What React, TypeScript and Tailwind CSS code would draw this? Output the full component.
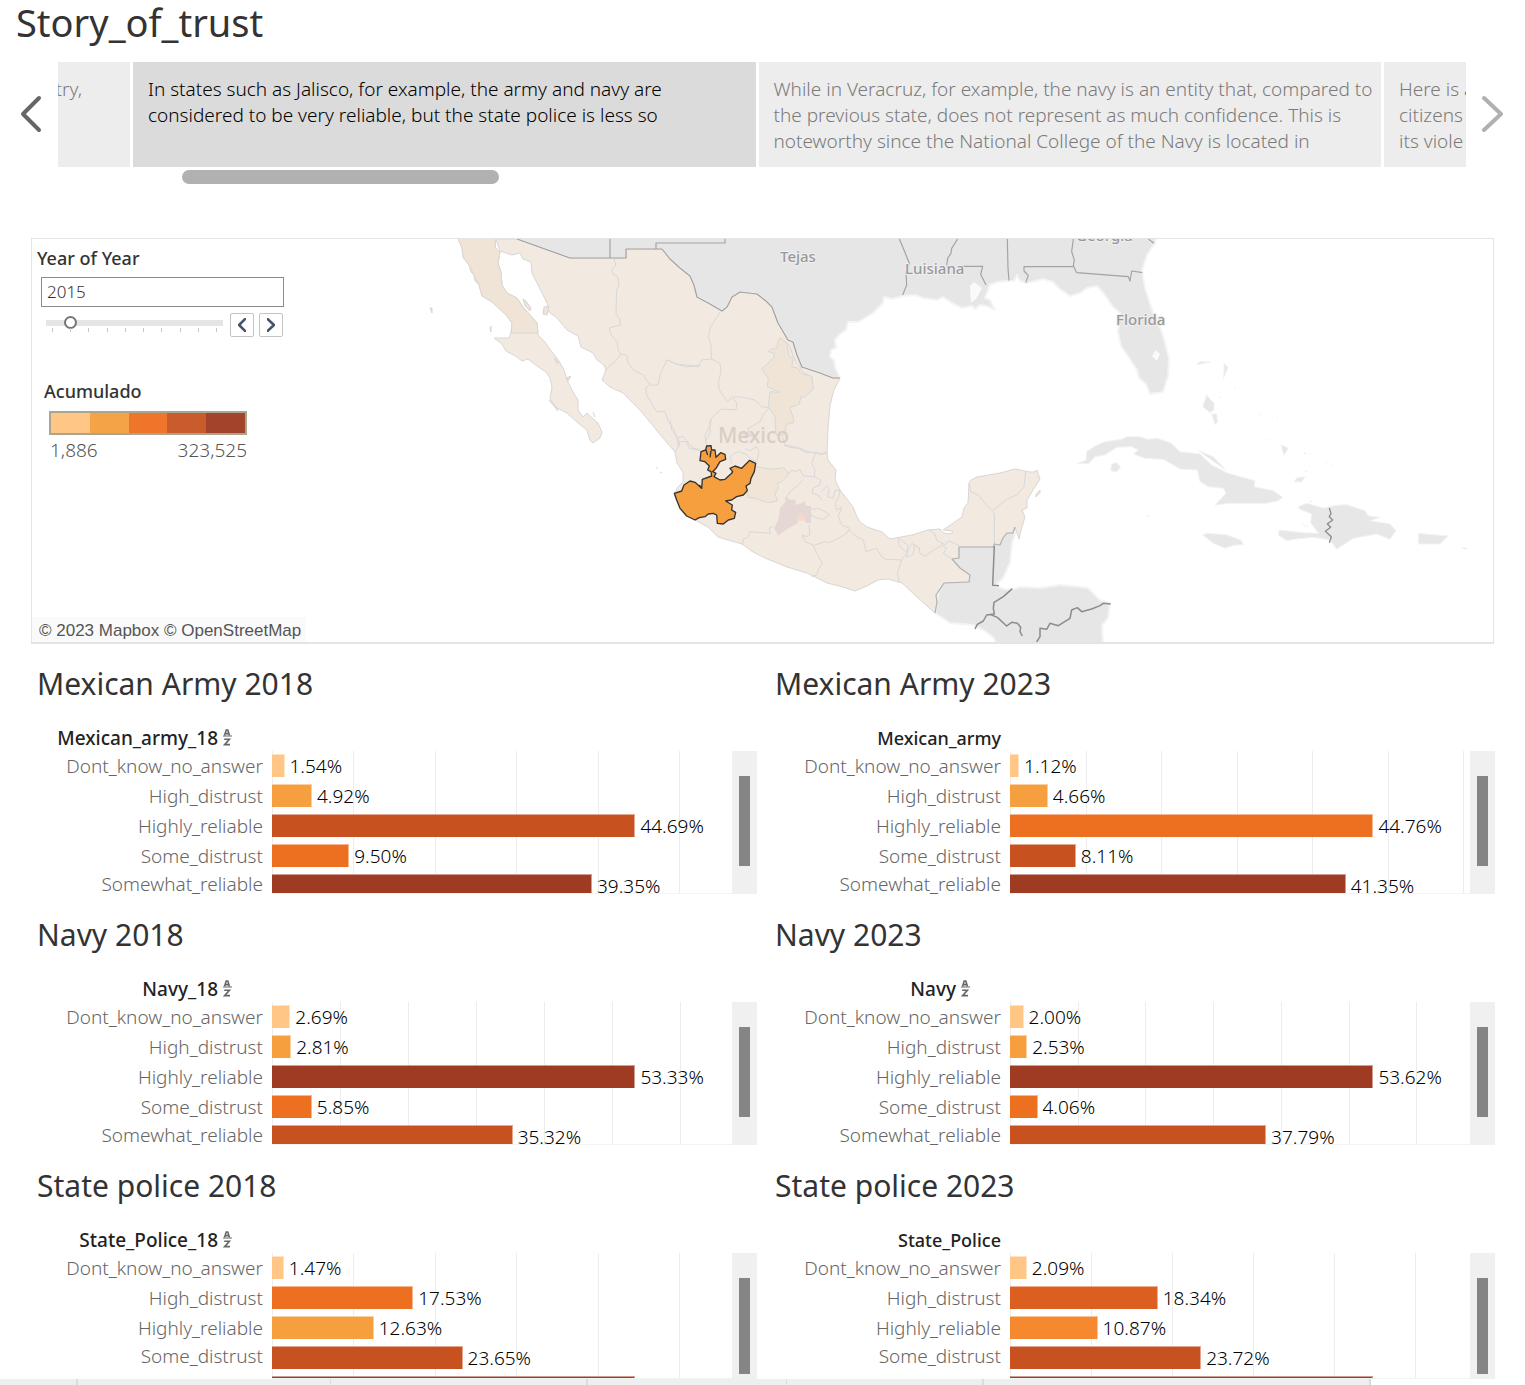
import React from "react";

type Row = { label: string; value: number; color: string };
type Chart = {
  title: string;
  field: string;
  sorted: boolean;
  max: number;
  tick: number;
  rows: Row[];
};

const LABELS = [
  "Dont_know_no_answer",
  "High_distrust",
  "Highly_reliable",
  "Some_distrust",
  "Somewhat_reliable",
];

const PEACH = "#ffc685";
const AMBER = "#f69f3e";
const ORANGE = "#ed6f20";
const RUST = "#c75220";
const BRICK = "#9e3b22";

/* Share of the plot's width that the longest bar takes. */
const FULL_BAR = 79;

function makeRows(values: number[], colors: string[]): Row[] {
  return values.map((value, i) => ({ label: LABELS[i], value, color: colors[i] }));
}

const CHARTS: Chart[] = [
  {
    title: "Mexican Army 2018",
    field: "Mexican_army_18",
    sorted: true,
    max: 44.69,
    tick: 17.7,
    rows: makeRows([1.54, 4.92, 44.69, 9.5, 39.35], [PEACH, AMBER, RUST, ORANGE, BRICK]),
  },
  {
    title: "Mexican Army 2023",
    field: "Mexican_army",
    sorted: false,
    max: 44.76,
    tick: 16.43,
    rows: makeRows([1.12, 4.66, 44.76, 8.11, 41.35], [PEACH, AMBER, ORANGE, RUST, BRICK]),
  },
  {
    title: "Navy 2018",
    field: "Navy_18",
    sorted: true,
    max: 53.33,
    tick: 14.8,
    rows: makeRows([2.69, 2.81, 53.33, 5.85, 35.32], [PEACH, AMBER, BRICK, ORANGE, RUST]),
  },
  {
    title: "Navy 2023",
    field: "Navy",
    sorted: true,
    max: 53.62,
    tick: 14.72,
    rows: makeRows([2.0, 2.53, 53.62, 4.06, 37.79], [PEACH, AMBER, BRICK, ORANGE, RUST]),
  },
  {
    title: "State police 2018",
    field: "State_Police_18",
    sorted: true,
    max: 45.1,
    tick: 17.7,
    rows: makeRows([1.47, 17.53, 12.63, 23.65, 45.1], [PEACH, ORANGE, AMBER, RUST, BRICK]),
  },
  {
    title: "State police 2023",
    field: "State_Police",
    sorted: false,
    max: 45.1,
    tick: 17.6,
    rows: makeRows([2.09, 18.34, 10.87, 23.72, 45.1], [PEACH, "#dd5f20", "#f6892f", RUST, BRICK]),
  },
];

function SortIcon() {
  return (
    <svg viewBox="0 0 9 17" className="h-[17px] w-[9px]" fill="none" stroke="#666" strokeWidth="1.6">
      <path d="M1.5 6.5 L3.2 1 H4.8 L6.5 6.5 M2 4.6 H6" />
      <path d="M0 7 H9" strokeWidth="1" />
      <path d="M1.2 10.2 H6.4 L1.6 15.6 H7" />
    </svg>
  );
}

function BarChart({ chart, tall }: { chart: Chart; tall: boolean }) {
  const ticks = Array.from({ length: 7 }, (_, i) => i * chart.tick).filter((t) => t < 100);
  const labelled = tall ? chart.rows : chart.rows.slice(0, 4);
  return (
    <section>
      <h2 className="h-[68px] pt-1 text-[30px] leading-[40px] text-[#333]">{chart.title}</h2>
      <div className="flex h-[23px] w-[226px] items-start">
        <h3
          className={
            chart.sorted
              ? "w-[181px] text-right text-[19px] leading-[20px] font-medium whitespace-nowrap text-[#222]"
              : "w-[226px] text-right text-[18px] leading-[20px] font-medium whitespace-nowrap text-[#222]"
          }
        >
          {chart.field}
        </h3>
        {chart.sorted && (
          <button aria-label={"Sort " + chart.field} className="mt-px ml-[5px]">
            <SortIcon />
          </button>
        )}
      </div>
      <div className={tall ? "flex h-[143px]" : "flex h-[126px]"}>
        <ul className="w-[226px] shrink-0 text-right text-[19px] leading-[31px] font-light text-[#666]">
          {labelled.map((r) => (
            <li key={r.label} className="h-[30px] last:h-[23px] last:leading-[27px]">
              {r.label}
            </li>
          ))}
        </ul>
        <div className="relative ml-[9px] flex-1 overflow-hidden border-b border-[#f3f3f3]">
          {ticks.map((t) => (
            <i key={t} className="absolute inset-y-0 w-px bg-[#ededed]" style={{ left: t + "%" }} />
          ))}
          {chart.rows.map((r, i) => (
            <div key={r.label} className="relative flex h-[30px] items-start pt-[3px]">
              <div
                className="h-[23px] shrink-0 border-t border-r border-white/50"
                style={{ backgroundColor: r.color, width: (r.value / chart.max) * FULL_BAR + "%" }}
              />
              {i < labelled.length && (
                <span className="ml-[5px] text-[19px] leading-[24px] font-light text-black">{r.value.toFixed(2)}%</span>
              )}
            </div>
          ))}
        </div>
        <div className="w-[25px] bg-[#f0f0f0] px-[7px] pt-[25px]">
          <div className={tall ? "h-[90px] w-[11px] bg-[#858585]" : "h-[96px] w-[11px] bg-[#858585]"} />
        </div>
      </div>
    </section>
  );
}

const US_BORDER =
  "L833 378 820 373 802 367 797 355 793 342 788 340 778 323 772 307 766 301 757 294 740 292 732 297 727 307 722 311 710 304 697 297 694 285 690 276 680 268 670 259 662 249 626 249 626 258 570 258 517 239";

const PACIFIC =
  "L500 251 512 255 520 253 523 259 531 262 532 273 538 285 543 295 547 303 549 312 557 318 567 330 578 336 581 347 593 353 597 360 604 365 606 370 602 380 610 387 623 393 632 402 640 410 650 422 663 438 675 452 677 463 683 472 683 482 678 487 674 494 680 508 695 520 708 527 718 537 742 544 753 552 765 558 787 567 807 573 827 583 843 587 855 591 867 586 878 580 888 579 902 583 917 597 935 613";

const SOUTH_BORDER =
  "L937 602 936 595 944 583 969 582 970 575 960 568 952 559 959 558 959 547 994 547 994 544 1000 545 1003 538 1007 533 1013 533 1015 527";

const GULF =
  "L1019 539 1021 530 1025 517 1022 510 1027 508 1027 500 1033 490 1040 479 1037 470 1034 472 1030 472 1015 469 1000 473 977 477 971 480 969 483 968 503 964 508 962 517 943 530 953 531 951 534 943 533 940 529 928 530 912 535 890 539 882 532 867 527 860 522 857 517 853 507 840 490 835 480 836 470 828 460 827 452 828 428 830 405 834 390 840 378";

const MEXICO = "M496 239 " + PACIFIC + " " + SOUTH_BORDER + " " + GULF + " " + US_BORDER + "Z";

function CountryMap() {
  return (
    <svg
      viewBox="32 239 1461 403"
      preserveAspectRatio="xMidYMid slice"
      className="absolute inset-0 h-full w-full"
      role="img"
      aria-label="Map of Mexico with Jalisco highlighted"
      strokeLinejoin="round"
    >
      <g fill="#e6e6e6" stroke="#f4f4f4" strokeWidth="2">
        <path d="M517 239 L570 258 626 258 626 249 662 249 670 259 680 268 690 276 694 285 697 297 710 304 722 311 727 307 732 297 740 292 757 294 766 301 772 307 778 323 788 340 793 342 797 355 802 367 820 373 833 378 840 378 835 367 834 360 830 357 831 350 836 348 835 340 840 334 846 330 848 322 858 322 873 313 883 303 884 297 892 299 903 296 915 295 923 298 937 300 943 297 952 303 962 308 972 306 975 309 980 305 987 306 995 310 990 300 985 298 988 290 990 285 997 282 1008 281 1014 281 1017 275 1020 281 1027 283 1043 279 1053 282 1060 289 1070 296 1080 293 1087 288 1097 286 1105 295 1113 307 1120 313 1118 332 1121 346 1128 356 1137 370 1139 378 1146 384 1150 394 1163 392 1168 376 1169 358 1162 332 1152 310 1145 288 1142 270 1147 255 1155 243 1157 236 517 236Z" />
        <path d="M935 613 L950 623 973 625 983 630 993 637 997 644 1103 644 1102 625 1108 618 1110 603 1100 600 1093 593 1088 588 1080 587 1060 585 1040 588 1020 587 1010 590 1001 588 995 586 1003 578 1010 563 1012 543 1015 535 1015 527 1000 535 990 540 955 545 950 560 965 575 940 585Z" />
      </g>
      <path d="M971 303 L976 299 982 288 974 282 970 286Z M1152 356 L1156 350 1160 354 1157 361Z" fill="#fafafa" />

      <path d={MEXICO} fill="#f2e9e0" stroke="#d9d6d3" />
      <path
        d="M457 236 L462 248 463 257 469 265 471 272 474 275 475 281 479 285 482 296 492 302 500 308 507 316 512 323 511 333 509 338 494 338 502 344 506 351 517 357 522 361 528 359 537 366 546 372 550 378 552 387 550 398 555 407 567 413 578 423 587 430 590 440 593 443 600 438 602 432 598 423 592 418 587 413 583 417 578 410 578 400 573 392 567 380 565 373 563 368 557 358 552 352 545 342 538 335 537 323 530 315 523 307 517 298 507 293 502 285 501 272 498 263 500 252 495 247 496 236Z"
        fill="#f2e9e0"
        stroke="#d9d6d3"
      />
      <path d="M457 236 L462 248 463 257 469 265 474 275 479 285 482 296 492 302 507 316 512 323 511 333 538 333 537 323 530 315 523 307 517 298 507 293 502 285 501 272 498 263 500 252 495 247 496 236Z" fill="#f0e4d6" stroke="#d9d6d3" />
      <g fill="#ece4dc" stroke="#d9d6d3">
        <path d="M523 299 L526 301 531 308 530 311 525 306Z M544 307 L549 306 547 315 543 314Z M554 358 L559 362 557 364Z M567 378 L571 376 568 381Z M430 308 L432 308 432 313Z M490 328 L491 326 491 332Z M549 400 L554 404 558 411Z M593 412 L595 417 M656 467 L658 469 M660 472 L662 473" />
        <path d="M1036 494 L1040 490 1040 493 1036 497Z" fill="#f2e9e0" />
      </g>

      <g transform="translate(420 235) scale(.33333)" fill="none" stroke="#d6d8da" strokeWidth="3">
        <path d="M582 72 L587 90 575 105 580 118 593 125 597 150 590 165 588 235 600 255 602 270 568 278 573 300 592 322 594 345 602 358 585 380 568 393 555 407" />
        <path d="M602 358 L620 360 624 382 640 405 670 420 685 443 700 452 715 448 720 420 740 375 765 385 800 396 822 393 840 390" />
        <path d="M690 448 L677 458 680 480 710 530 735 530 745 560 760 580 770 608 790 605 807 625 820 640 840 643 M775 610 L780 630 765 650" />
      </g>
      <g transform="translate(640 235) scale(.33333)" fill="none" stroke="#d6d8da" strokeWidth="3">
        <path d="M242 230 L225 255 212 275 205 305 212 325 215 372 185 375 175 396 140 390 110 388 80 374" />
        <path d="M215 372 L240 385 243 410 235 440 238 465 262 500 280 485 310 487 345 495 365 515 388 518 372 535 360 560 325 580 325 595 340 605" />
        <path d="M280 490 L290 505 288 525 245 522 215 548 208 575 195 600 200 640" />
        <path d="M427 605 L435 630 475 638 510 652 530 655 562 655" />
        <path d="M437 320 L450 335 460 365 470 385 480 395 487 410 515 425 518 445" />
        <path
          d="M415 318 L422 308 440 325 447 362 460 370 455 395 475 400 482 415 517 425 517 450 523 460 495 485 482 487 478 508 450 518 460 550 462 562 440 568 432 600 408 600 405 545 385 515 390 470 420 472 382 455 385 430 365 402 400 370 403 355 385 350 392 343 410 340Z"
          fill="#f0e4d6"
        />
      </g>
      <g transform="translate(640 420) scale(.33333)" fill="none" stroke="#d6d8da" strokeWidth="3">
        <path d="M345 140 L395 148 430 143 447 160 440 170 425 185 412 190 415 205 405 222 412 243 385 248 370 243 345 235 325 232 315 205 330 170Z" fill="#f1e5d8" />
        <path d="M432 75 L450 82 475 85 500 98 527 97 545 105 560 95 M527 97 L515 130 525 150 523 170 M447 160 L455 150 468 155 480 148 490 168 523 170 542 180 540 195 518 205 517 220 535 225 545 240" />
        <path d="M545 215 L560 197 567 205 563 230 580 235 585 210 600 212 597 230 585 250 590 270 605 262 595 290 605 315 630 325 620 340 590 358 565 368 553 365 525 375" />
        <path d="M512 268 L535 265 555 275 568 285 550 298 528 293 513 285 M470 200 L450 215 438 235 M470 200 L490 178 M400 320 L387 325 392 340 330 335 325 350 310 358 307 373 M485 345 L500 350 510 345 507 315 M487 345 L495 365 520 375 530 400 547 430 537 445 530 465 515 470" />
        <path d="M620 340 L628 330 650 350 670 360 678 395 710 385 725 410 737 418 785 420 M785 420 L800 400 803 375 775 355 M785 420 L772 460 778 487 M800 400 L815 370 833 380 840 390" />
        <path d="M90 0 L95 30 110 50 115 80 118 65 140 65 148 85 165 88 180 92 M275 130 L270 112 285 98 300 95 320 105 335 118 350 125 357 95 350 80 330 92 315 85 M210 0 L210 40 195 65 M300 40 L340 50 352 38" />
        <path d="M435 230 L452 240 465 238 468 255 485 250 495 243 497 258 513 258 513 310 497 308 490 290 480 282 473 290 473 310 440 328 415 347 403 325 415 300 420 265 437 245Z" fill="#e5d7d3" stroke="none" />
        <path d="M483 277 L492 290 490 303 475 302 474 290Z" fill="#f5d9c8" stroke="none" />
      </g>
      <g transform="translate(860 440) scale(.33333)" fill="none" stroke="#d6d8da" strokeWidth="3">
        <path d="M328 130 L332 155 355 165 375 190 397 213 403 222 403 312 M397 213 L440 178 470 165 492 140 497 95" />
        <path d="M115 298 L118 318 142 340 140 352 158 345 165 315 178 325 180 340 195 348 245 315 260 325 250 340 272 355 M205 270 L225 282 230 300 255 315 265 302 298 317" />
      </g>

      <g fill="none" stroke="#a3a3a3" strokeWidth="1.2">
        <path d={"M840 378 " + US_BORDER} />
        <path d={"M935 613 " + SOUTH_BORDER} stroke="#b3b3b3" />
        <path d="M610 239 V258 M656 249 V243 H725 V239" />
      </g>
      <g transform="translate(880 235) scale(.33333)" fill="none" stroke="#a3a3a3" strokeWidth="3.5">
        <path d="M58 12 L68 35 78 60 88 85 78 110 80 150 68 180 M233 12 L215 40 213 55 203 70 200 92 M245 94 L308 94 302 118 318 150 M382 12 L384 100 387 137 M580 12 L575 50 583 75 580 92 590 113 745 125 750 138 755 108 787 113 M582 95 L432 95 432 108 445 122 437 143 M805 12 L822 25" />
      </g>
      <g transform="translate(860 440) scale(.33333)" fill="none" stroke="#8c8c8c" strokeWidth="4.5">
        <path d="M403 318 L398 436 417 437 M457 446 L430 470 402 487 400 505 403 522 380 525 370 543 352 553 345 567 M390 523 L412 532 440 558 455 547 472 550 482 562 480 575 487 588 M530 606 L540 590 540 565 560 568 570 550 595 557 630 535 635 510 652 503 665 515 695 507 720 497 730 490 752 492" />
      </g>

      <g transform="translate(1070 340) scale(.33333)" fill="#e7e7e7" stroke="#f3f3f3" strokeWidth="3">
        <path d="M20 372 L48 360 50 335 75 318 105 305 155 298 170 290 210 290 232 298 262 295 302 308 330 335 390 342 425 375 470 398 510 410 555 422 552 440 610 452 638 472 625 482 590 490 480 490 435 495 468 460 460 445 415 440 390 425 382 390 330 387 280 358 225 355 190 342 205 330 185 320 140 322 105 345 75 350 55 372 40 370Z" />
        <path d="M125 372 L140 368 152 382 140 396 122 392Z M398 585 L410 580 470 584 512 600 520 614 490 616 465 625 430 610Z M685 500 L710 490 760 504 800 496 830 494 885 512 895 528 930 532 900 542 960 552 978 572 960 598 920 582 850 595 800 628 780 600 730 592 670 598 650 602 625 585 628 570 700 578 745 580 722 548 725 522 690 508Z M1045 580 L1135 588 1110 612 1045 612Z" />
        <path d="M410 165 L432 190 432 210 420 218 398 200Z M425 222 L440 222 443 245 435 254Z M380 75 L390 64 420 66Z M462 70 L474 82 460 116 462 95Z M672 425 L680 414 705 410 695 426Z M385 332 L430 350 470 392 M633 315 L655 324 642 346 M695 553 L715 560" />
        <path d="M493 142 h3 M450 172 h3 M568 224 h4 M621 234 h3 M596 299 h3 M703 340 h5 M718 341 h3 M767 368 h3 M782 376 h3 M706 394 h4 M232 529 h5 M720 484 h5 M1178 625 h12" stroke="#e3e3e3" />
        <path d="M778 504 L783 520 778 530 788 540 772 552 782 562 766 574 784 590 778 608" fill="none" stroke="#8c8c8c" strokeWidth="4" />
      </g>

      <g className="font-['Noto_Sans'] font-medium" fill="#999" stroke="#efefef" strokeWidth="2" paintOrder="stroke" fontSize="15">
        <text x="780" y="262">Tejas</text>
        <text x="905" y="274">Luisiana</text>
        <text x="1116" y="325">Florida</text>
        <text x="1076" y="241">Georgia</text>
        <text x="718" y="443" fontSize="21" fill="#d8cec5" stroke="none">Mexico</text>
      </g>

      <g transform="translate(640 420) scale(.33333)" fill="#f69f3e" stroke="#333" strokeWidth="4">
        <path d="M103 220 L125 213 132 195 150 183 165 187 185 205 187 178 215 168 213 155 203 150 208 138 195 125 180 122 183 95 197 90 200 78 213 77 215 90 225 90 228 112 242 98 255 103 257 118 240 125 228 145 218 155 228 160 222 170 240 180 255 178 275 160 278 155 270 145 285 138 305 145 320 130 328 121 347 130 343 155 333 175 330 190 318 198 322 212 310 225 290 230 275 240 257 243 277 255 275 270 287 277 283 295 265 300 250 312 232 310 230 285 220 280 205 282 195 290 178 293 165 300 140 288 120 265 110 240Z" />
        <path d="M198 90 L203 105 M213 92 L210 112 M185 205 L178 195" fill="none" />
      </g>
    </svg>
  );
}

const LEGEND = ["bg-[#ffc685]", "bg-[#f4a346]", "bg-[#ee752a]", "bg-[#c95c2c]", "bg-[#a1442b]"];

function Chevron({ right, className }: { right?: boolean; className: string }) {
  return (
    <svg viewBox="0 0 22 38" className={className} fill="none" stroke="currentColor" strokeLinecap="round" strokeLinejoin="round">
      <path d={right ? "M2 3 L19 19 2 35" : "M19 3 L3 19 19 35"} />
    </svg>
  );
}

export default function App() {
  return (
    <main className="overflow-hidden bg-white font-['Noto_Sans',sans-serif]">
      <h1 className="h-[62px] pl-4 text-[38px] leading-[44px] text-[#333]">Story_of_trust</h1>

      <nav aria-label="Story points" className="flex h-[105px]">
        <button aria-label="Previous" className="flex w-[58px] items-center justify-center pb-[2px] pl-1 text-[#666]">
          <Chevron className="w-[22px] stroke-4" />
        </button>
        <div className="flex flex-1 gap-[3px] overflow-hidden text-[19px] leading-[26px] font-light whitespace-nowrap text-[#7b7b7b]">
          <button className="flex w-[72px] justify-end overflow-hidden bg-[#ededed] pt-[14px] pr-12 text-left">country,</button>
          <button aria-current="true" className="flex flex-1 bg-[#dbdbdb] pt-[14px] pl-[15px] text-left text-black">
            In states such as Jalisco, for example, the army and navy are
            <br />
            considered to be very reliable, but the state police is less so
          </button>
          <button className="flex flex-1 bg-[#ededed] pt-[14px] pl-[15px] text-left">
            While in Veracruz, for example, the navy is an entity that, compared to
            <br />
            the previous state, does not represent as much confidence. This is
            <br />
            noteworthy since the National College of the Navy is located in
          </button>
          <button className="flex w-[82px] overflow-hidden bg-[#ededed] pt-[14px] pl-[15px] text-left">
            Here is a
            <br />
            citizens
            <br />
            its viole
          </button>
        </div>
        <button aria-label="Next" className="flex w-[59px] items-center justify-center pr-[6px] pb-[2px] text-[#b0b0b0]">
          <Chevron right className="w-[22px] stroke-4" />
        </button>
      </nav>
      <div className="mt-[3px] ml-[182px] h-[14px] w-[317px] rounded-full bg-[#b1b1b1]" />

      <div className="relative mt-[54px] mr-[31px] ml-[31px] flex h-[406px] flex-col items-start overflow-hidden border border-b-2 border-[#e4e4e4]">
        <CountryMap />
        <label htmlFor="year" className="relative mt-[7px] ml-[5px] text-[18px] leading-[25px] font-medium text-[#333]">
          Year of Year
        </label>
        <input
          id="year"
          defaultValue="2015"
          className="relative mt-[6px] ml-[9px] h-[30px] w-[243px] border border-[#8c8c8c] bg-white px-[5px] pb-[2px] text-[17px] font-light text-[#333]"
        />
        <div className="relative mt-[6px] ml-[14px] flex h-6 items-start">
          <div className="w-[177px] pt-[3px]">
            <input
              type="range"
              aria-label="Year"
              min={2014}
              max={2023}
              defaultValue={2015}
              className="block h-[13px] w-full appearance-none bg-transparent bg-[linear-gradient(#e5e5e5,#e5e5e5)] bg-[length:100%_6px] bg-center bg-no-repeat [&::-webkit-slider-thumb]:size-[13px] [&::-webkit-slider-thumb]:appearance-none [&::-webkit-slider-thumb]:rounded-full [&::-webkit-slider-thumb]:border-2 [&::-webkit-slider-thumb]:border-[#757575] [&::-webkit-slider-thumb]:bg-white"
            />
            <div className="-mt-px flex justify-between px-[6px]">
              {Array.from({ length: 10 }, (_, i) => (
                <i key={i} className="h-[4px] w-px bg-[#c4c4c4]" />
              ))}
            </div>
          </div>
          <button aria-label="Previous year" className="ml-[7px] flex size-6 items-center justify-center rounded-xs border border-[#c4c4c4] bg-white text-[#44546a]">
            <Chevron className="h-[14px] stroke-7" />
          </button>
          <button aria-label="Next year" className="ml-[5px] flex size-6 items-center justify-center rounded-xs border border-[#c4c4c4] bg-white text-[#44546a]">
            <Chevron right className="h-[14px] stroke-7" />
          </button>
        </div>
        <div className="relative mt-[42px] ml-3 text-[18px] leading-[25px] font-medium text-[#333]">Acumulado</div>
        <div className="relative mt-[7px] ml-[17px] flex h-6 w-[198px] border-2 border-[#a9a590]">
          {LEGEND.map((c) => (
            <i key={c} className={"flex-1 " + c} />
          ))}
        </div>
        <div className="relative mt-[2px] ml-[18px] flex w-[197px] justify-between text-[19px] leading-[26px] font-light text-[#555]">
          <span>1,886</span>
          <span>323,525</span>
        </div>
        <p className="relative mt-auto bg-[#fafafa] pt-[3px] pr-[5px] pl-[7px] font-['Liberation_Sans',sans-serif] text-[17px] leading-[22px] text-[#555]">
          © 2023 Mapbox © OpenStreetMap
        </p>
      </div>

      <div className="mt-4 mr-[30px] ml-[37px] grid grid-cols-2 gap-x-[18px] gap-y-[17px]">
        {CHARTS.map((c, i) => (
          <BarChart key={c.title} chart={c} tall={i < 4} />
        ))}
      </div>

      <footer className="mr-[154px] flex h-[6px] bg-[#efefef]">
        <i className="w-[78px] border-r-2 border-[#dcdcdc]" />
        <i className="w-[253px] border-r border-[#dcdcdc]" />
        <i className="w-[257px] border-r-2 border-[#dcdcdc]" />
        <i className="w-[199px] border-r border-[#dcdcdc]" />
        <i className="w-[197px] border-r-2 border-[#dcdcdc]" />
        <i className="flex-1 border-r-2 border-[#dcdcdc]" />
      </footer>
    </main>
  );
}
